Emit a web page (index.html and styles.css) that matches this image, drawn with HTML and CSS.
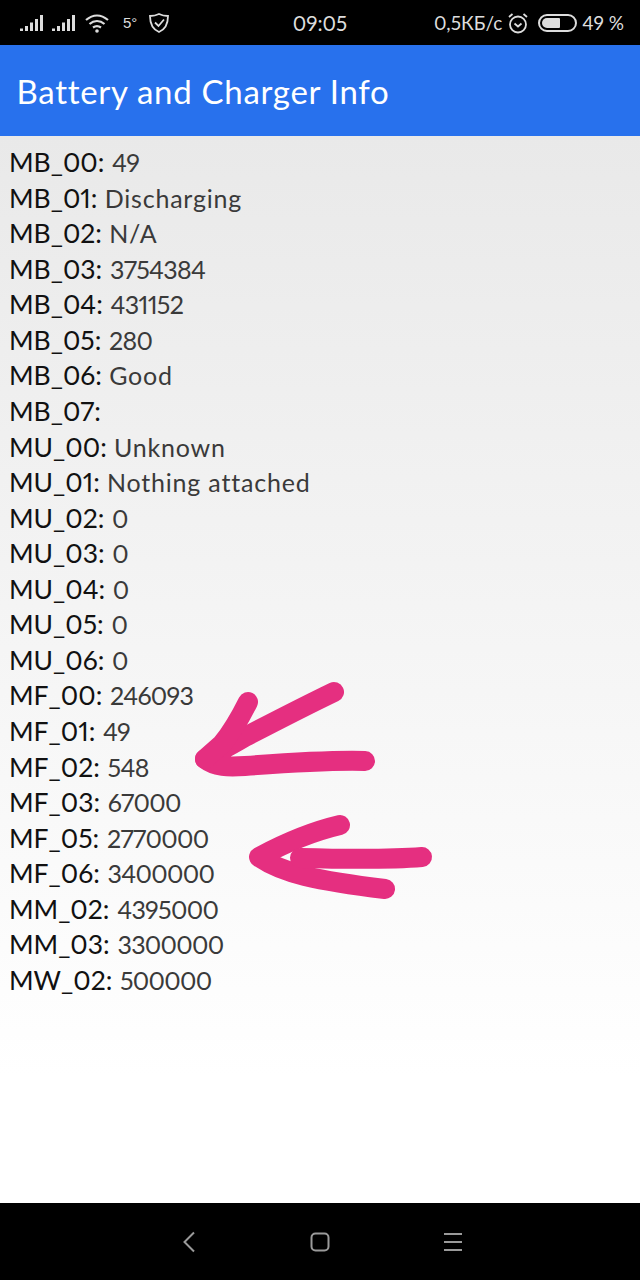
FILE: index.html
```html
<!DOCTYPE html>
<html lang="en">
<head>
    <meta charset="UTF-8">
    <meta name="viewport" content="width=device-width, initial-scale=1.0">
    <title>Battery and Charger Info</title>
    <link rel="stylesheet" href="styles.css">
</head>
<body>
    <div class="screen">
        <!-- Status bar -->
        <div class="status-bar">
            <div class="status-left">
                <svg class="signal" width="24" height="18" viewBox="0 0 24 18"><path d="M0 14.500h3V17H0zM5 12h3v5H5zM10 8.500h3V17h-3zM15 5h3v12h-3zM20 1h3v16h-3z"/></svg>
                <svg class="signal second" width="24" height="18" viewBox="0 0 24 18"><path d="M0 14.500h3V17H0zM5 12h3v5H5zM10 8.500h3V17h-3zM15 5h3v12h-3zM20 1h3v16h-3z"/></svg>
                <svg class="wifi" width="26" height="20" viewBox="0 0 26 20"><path d="M2 7C9 1 17 1 24 7M5.500 11C10 7 16 7 20.500 11M9 14.500C11.500 12.800 14.500 12.800 17 14.500"/><circle cx="13" cy="18" r="1.800"/></svg>
                <span class="temp">5°</span>
                <svg class="shield" width="22" height="22" viewBox="0 0 22 22"><path d="M11 2C14 3.500 17 4 20 4C20 11 18 17 11 20C4 17 2 11 2 4C5 4 8 3.500 11 2Z"/><path d="M7 10.500L10.500 14L16 7.500"/></svg>
            </div>
            <div class="status-time">09:05</div>
            <div class="status-right">
                <span>0,5КБ/с</span>
                <svg class="alarm" width="22" height="22" viewBox="0 0 22 22"><circle cx="11" cy="12.500" r="8"/><path d="M7.500 11.500L11 14.500L14.500 11.500M2 5L5.500 2M20 5L16.500 2"/></svg>
                <div class="battery"><div class="battery-fill"></div></div>
                <span>49 %</span>
            </div>
        </div>

        <!-- App bar -->
        <div class="app-bar">Battery and Charger Info</div>

        <!-- Values list -->
        <div class="content">
            <div class="row"><span class="key">MB_00:</span> 49</div>
            <div class="row text"><span class="key">MB_01:</span> Discharging</div>
            <div class="row text"><span class="key">MB_02:</span> N/A</div>
            <div class="row"><span class="key">MB_03:</span> 3754384</div>
            <div class="row"><span class="key">MB_04:</span> 431152</div>
            <div class="row"><span class="key">MB_05:</span> 280</div>
            <div class="row text"><span class="key">MB_06:</span> Good</div>
            <div class="row"><span class="key">MB_07:</span></div>
            <div class="row text"><span class="key">MU_00:</span> Unknown</div>
            <div class="row text"><span class="key">MU_01:</span> Nothing attached</div>
            <div class="row"><span class="key">MU_02:</span> 0</div>
            <div class="row"><span class="key">MU_03:</span> 0</div>
            <div class="row"><span class="key">MU_04:</span> 0</div>
            <div class="row"><span class="key">MU_05:</span> 0</div>
            <div class="row"><span class="key">MU_06:</span> 0</div>
            <div class="row"><span class="key">MF_00:</span> 246093</div>
            <div class="row"><span class="key">MF_01:</span> 49</div>
            <div class="row"><span class="key">MF_02:</span> 548</div>
            <div class="row"><span class="key">MF_03:</span> 67000</div>
            <div class="row"><span class="key">MF_05:</span> 2770000</div>
            <div class="row"><span class="key">MF_06:</span> 3400000</div>
            <div class="row"><span class="key">MM_02:</span> 4395000</div>
            <div class="row"><span class="key">MM_03:</span> 3300000</div>
            <div class="row"><span class="key">MW_02:</span> 500000</div>

            <!-- Hand drawn arrows on top of the screenshot -->
            <svg class="arrows" width="640" height="1067" viewBox="0 136 640 1067">
                <path d="M334 692C305 706 270 724 245 737C230 746 218 752 205 759C215 767 228 767 245 766C285 763 330 760 365 761"/>
                <path d="M248 702C240 718 232 732 222 744L205 759"/>
                <path d="M340 825C310 832 285 843 259 857C272 866 285 871 305 876C330 882 360 886 385 889"/>
                <path d="M300 858C340 859 385 860 422 857"/>
            </svg>
        </div>

        <!-- Navigation bar -->
        <div class="nav-bar">
            <svg width="14" height="22" viewBox="0 0 14 22"><path d="M12 1.500L2.500 11L12 20.500"/></svg>
            <svg width="20" height="20" viewBox="0 0 20 20"><rect x="1.500" y="1.500" width="17" height="17" rx="4"/></svg>
            <svg width="18" height="20" viewBox="0 0 18 20"><path d="M0 2h18M0 10h18M0 18h18"/></svg>
        </div>
    </div>
</body>
</html>
```

FILE: styles.css
```css
body {
    margin: 0;
    font-family: 'Lato', 'Liberation Sans', sans-serif;
    font-variant-numeric: proportional-nums;
}

.screen {
    width: 640px;
    height: 1280px;
    display: flex;
    flex-direction: column;
    overflow: hidden;
}

.status-bar {
    height: 45px;
    background-color: #000;
    color: #ddd;
    font-size: 20.500px;
    display: grid;
    grid-template-columns: 1fr auto 1fr;
    align-items: center;
    padding: 0 16px;
    box-sizing: border-box;
}

.status-left, .status-right {
    display: flex;
    align-items: center;
}

.status-left {
    padding-left: 4px;
}

.status-right {
    justify-content: flex-end;
    gap: 5px;
    font-size: 19px;
}

.signal {
    fill: #ddd;
}

.signal.second {
    margin-left: 8px;
}

.wifi {
    margin-left: 8px;
    fill: #ddd;
}

.wifi path {
    fill: none;
    stroke: #ddd;
    stroke-width: 2.2;
}

.temp {
    margin-left: 13px;
    font-family: 'Liberation Sans Narrow', 'Liberation Sans', sans-serif;
    font-size: 15px;
}

.shield {
    margin-left: 11px;
}

.shield path, .alarm circle, .alarm path {
    fill: none;
    stroke: #ddd;
    stroke-width: 1.8;
}

.battery {
    width: 39px;
    height: 18px;
    margin-left: 4px;
    border: 2px solid #ddd;
    border-radius: 9px;
    box-sizing: border-box;
    padding: 2px;
}

.battery-fill {
    width: 18px;
    height: 100%;
    background-color: #ddd;
    border-radius: 5px 1px 1px 5px;
}

.app-bar {
    height: 91px;
    background-color: #2871ed;
    color: #fff;
    font-size: 33px;
    line-height: 93px;
    padding-left: 16.500px;
    letter-spacing: 0.7px;
}

.content {
    flex: 1;
    position: relative;
    box-sizing: border-box;
    padding: 9px 0 0 9px;
    background: linear-gradient(#e9e9e9, #ffffff 88%);
    color: #3a3a3a;
    font-size: 25px;
    letter-spacing: -0.7px;
}

.row {
    height: 35.570px;
    line-height: 35.570px;
    white-space: nowrap;
}

.row.text {
    letter-spacing: 0.8px;
}

.key {
    color: #111;
    font-size: 26.500px;
    letter-spacing: 0;
    margin-right: 2px;
}

.row.text .key {
    margin-right: 0;
}

.arrows {
    position: absolute;
    left: 0;
    top: 0;
}

.arrows path {
    fill: none;
    stroke: #e52f80;
    stroke-width: 20;
    stroke-linecap: round;
    stroke-linejoin: round;
}

.nav-bar {
    height: 77px;
    background-color: #000;
    display: flex;
    justify-content: center;
    align-items: center;
    gap: 114px;
    padding-left: 4px;
}

.nav-bar path, .nav-bar rect {
    fill: none;
    stroke: #9a9a9a;
    stroke-width: 2;
}
```
